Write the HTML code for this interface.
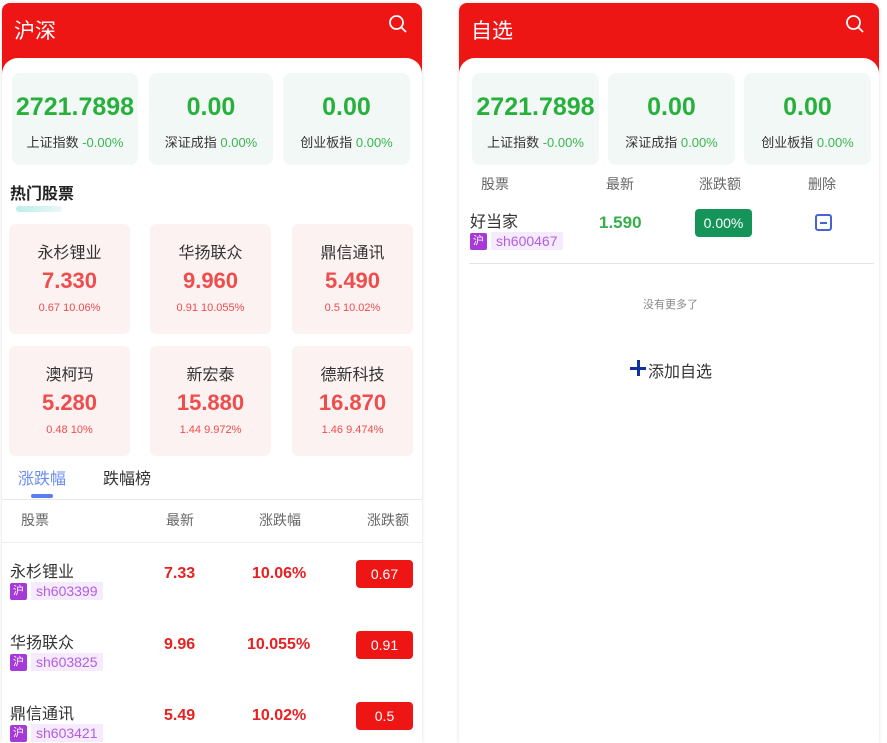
<!DOCTYPE html><html><head><meta charset="utf-8"><style>
*{margin:0;padding:0;box-sizing:border-box}
body{width:887px;height:732px;background:#fff;font-family:"Liberation Sans","Noto Sans CJK SC",sans-serif;position:relative;overflow:hidden}
.p{position:absolute;top:3px;width:420px;height:740px;background:#fff;box-shadow:0 0 4px rgba(0,0,0,.12);border-radius:8px 8px 0 0;overflow:hidden}
.hd{position:absolute;left:0;top:0;width:100%;height:72px;background:#ee1515}
.bd{position:absolute;left:0;top:55px;width:100%;height:700px;background:#fff;border-radius:16px 16px 0 0}
.t{position:absolute;left:12px;top:12px;color:#fff;font-size:21px}
.s{position:absolute;right:14px;top:11px}
.a{position:absolute;white-space:nowrap}
.ic{position:absolute;top:70px;height:92px;background:#f2f8f5;border-radius:8px;text-align:center}
.ic b{display:block;margin-top:20px;font-size:25px;color:#27b03c;font-weight:bold}
.ic span{display:block;margin-top:10px;font-size:13px;color:#333}
.ic span i{font-style:normal;color:#3bb552}
.hc{position:absolute;width:121px;height:110px;background:#fdf2f2;border-radius:6px;text-align:center}
.hc .n{margin-top:15px;font-size:16px;color:#333}
.hc .pr{margin-top:5px;font-size:22px;font-weight:bold;color:#ef4c4c}
.hc .sm{margin-top:8px;font-size:11px;color:#ef4c4c}
.g{color:#666;font-size:14px}
.tag{display:inline-block;background:#a63ad8;color:#fff;font-size:11px;width:17px;height:17px;line-height:17px;text-align:center;border-radius:2px;vertical-align:middle}
.code{display:inline-block;background:#f6ebfc;color:#b35ee0;font-size:14px;padding:0 5px;height:18px;line-height:18px;margin-left:4px;vertical-align:middle}
.rb{position:absolute;background:#ee1515;color:#fff;font-size:14px;border-radius:4px;text-align:center;line-height:28px;width:57px;height:28px}
.red{color:#e82020;font-weight:bold;font-size:16px}
</style></head><body>
<div class="p" style="left:2px">
<div class="hd"></div><div class="bd"></div>
<div class="t">沪深</div>
<svg class="s" width="20" height="20" viewBox="0 0 20 20"><circle cx="8.5" cy="8.5" r="6.5" stroke="#fff" stroke-width="1.8" fill="none"/><path d="M13.5 13.5L18 18" stroke="#fff" stroke-width="1.8"/></svg>
<div class="ic" style="left:10px;width:126px"><b>2721.7898</b><span>上证指数 <i>-0.00%</i></span></div>
<div class="ic" style="left:147px;width:124px"><b>0.00</b><span>深证成指 <i>0.00%</i></span></div>
<div class="ic" style="left:281px;width:127px"><b>0.00</b><span>创业板指 <i>0.00%</i></span></div>
<div class="a" style="left:8px;top:177px;font-size:16px;font-weight:bold;color:#222">热门股票</div>
<div class="a" style="left:14px;top:203px;width:46px;height:6px;border-radius:3px;background:linear-gradient(90deg,#bdeeea,#e8f8f7)"></div>
<div class="hc" style="left:7px;top:221px"><div class="n">永杉锂业</div><div class="pr">7.330</div><div class="sm">0.67 10.06%</div></div>
<div class="hc" style="left:148px;top:221px"><div class="n">华扬联众</div><div class="pr">9.960</div><div class="sm">0.91 10.055%</div></div>
<div class="hc" style="left:290px;top:221px"><div class="n">鼎信通讯</div><div class="pr">5.490</div><div class="sm">0.5 10.02%</div></div>
<div class="hc" style="left:7px;top:343px"><div class="n">澳柯玛</div><div class="pr">5.280</div><div class="sm">0.48 10%</div></div>
<div class="hc" style="left:148px;top:343px"><div class="n">新宏泰</div><div class="pr">15.880</div><div class="sm">1.44 9.972%</div></div>
<div class="hc" style="left:290px;top:343px"><div class="n">德新科技</div><div class="pr">16.870</div><div class="sm">1.46 9.474%</div></div>
<div class="a" style="left:16px;top:462px;font-size:16px;color:#6b8ef0">涨跌幅</div>
<div class="a" style="left:101px;top:462px;font-size:16px;color:#333">跌幅榜</div>
<div class="a" style="left:29px;top:491px;width:22px;height:4px;border-radius:2px;background:#5a7ef0"></div>
<div class="a" style="left:0;top:496px;width:420px;height:1px;background:#e8e8e8"></div>
<div class="a g" style="left:19px;top:507px">股票</div>
<div class="a g" style="left:164px;top:507px">最新</div>
<div class="a g" style="left:257px;top:507px">涨跌幅</div>
<div class="a g" style="left:365px;top:507px">涨跌额</div>
<div class="a" style="left:0;top:539px;width:420px;height:1px;background:#eee"></div>

<div class="a" style="left:8px;top:555px;font-size:16px;color:#333">永杉锂业</div>
<div class="a" style="left:8px;top:579px"><span class="tag">沪</span><span class="code">sh603399</span></div>
<div class="a red" style="left:162px;top:562px">7.33</div><div class="a red" style="left:250px;top:562px">10.06%</div>
<div class="rb" style="left:354px;top:557px">0.67</div>

<div class="a" style="left:8px;top:626px;font-size:16px;color:#333">华扬联众</div>
<div class="a" style="left:8px;top:650px"><span class="tag">沪</span><span class="code">sh603825</span></div>
<div class="a red" style="left:162px;top:633px">9.96</div><div class="a red" style="left:245px;top:633px">10.055%</div>
<div class="rb" style="left:354px;top:628px">0.91</div>

<div class="a" style="left:8px;top:697px;font-size:16px;color:#333">鼎信通讯</div>
<div class="a" style="left:8px;top:721px"><span class="tag">沪</span><span class="code">sh603421</span></div>
<div class="a red" style="left:162px;top:704px">5.49</div><div class="a red" style="left:250px;top:704px">10.02%</div>
<div class="rb" style="left:354px;top:699px">0.5</div>
</div>

<div class="p" style="left:459px">
<div class="hd"></div><div class="bd"></div>
<div class="t">自选</div>
<svg class="s" width="20" height="20" viewBox="0 0 20 20"><circle cx="8.5" cy="8.5" r="6.5" stroke="#fff" stroke-width="1.8" fill="none"/><path d="M13.5 13.5L18 18" stroke="#fff" stroke-width="1.8"/></svg>
<div class="ic" style="left:13px;width:127px"><b>2721.7898</b><span>上证指数 <i>-0.00%</i></span></div>
<div class="ic" style="left:149px;width:127px"><b>0.00</b><span>深证成指 <i>0.00%</i></span></div>
<div class="ic" style="left:285px;width:127px"><b>0.00</b><span>创业板指 <i>0.00%</i></span></div>
<div class="a g" style="left:22px;top:171px">股票</div>
<div class="a g" style="left:147px;top:171px">最新</div>
<div class="a g" style="left:240px;top:171px">涨跌额</div>
<div class="a g" style="left:349px;top:171px">删除</div>
<div class="a" style="left:11px;top:205px;font-size:16px;color:#333">好当家</div>
<div class="a" style="left:11px;top:229px"><span class="tag">沪</span><span class="code">sh600467</span></div>
<div class="a" style="left:140px;top:210px;font-size:17px;font-weight:bold;color:#35b04a">1.590</div>
<div class="a" style="left:236px;top:206px;width:57px;height:28px;border-radius:4px;background:#149458;color:#fff;font-size:14px;text-align:center;line-height:28px">0.00%</div>
<div class="a" style="left:356px;top:211px;width:17px;height:17px;border:2px solid #4a62d8;border-radius:3px"><div style="position:absolute;left:3px;top:5.5px;width:7px;height:2px;background:#4a62d8"></div></div>
<div class="a" style="left:10px;top:260px;width:405px;height:1px;background:#e5e5e5"></div>
<div class="a" style="left:184px;top:293px;font-size:11px;color:#888">没有更多了</div>
<div class="a" style="left:171px;top:357px;width:16px;height:16px"><div style="position:absolute;left:0;top:7px;width:16px;height:3px;background:#1030a0"></div><div style="position:absolute;left:6.5px;top:0;width:3px;height:16px;background:#1030a0"></div></div>
<div class="a" style="left:189px;top:355px;font-size:16px;color:#333">添加自选</div>
</div>
</body></html>
